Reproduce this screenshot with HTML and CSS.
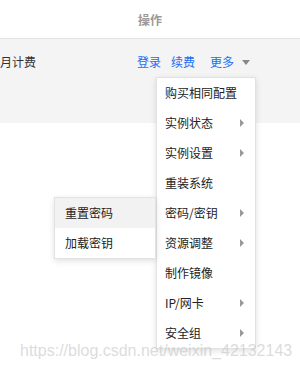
FILE: index.html
```html
<!DOCTYPE html>
<html lang="zh-CN">
<head>
  <meta charset="UTF-8">
  <title>操作</title>
  <link rel="stylesheet" href="styles.css">
</head>
<body>
  <div class="thead">操作</div>

  <div class="row">
    <span class="billing">月计费</span>
    <div class="ops">
      <a class="link">登录</a>
      <a class="link">续费</a>
      <a class="link more">更多 <i class="caret"></i></a>
    </div>
  </div>

  <!-- dropdown for 更多 -->
  <ul class="menu main">
    <li>购买相同配置</li>
    <li class="has-sub">实例状态</li>
    <li class="has-sub">实例设置</li>
    <li>重装系统</li>
    <li class="has-sub">密码/密钥
      <ul class="menu sub">
        <li class="hover">重置密码</li>
        <li>加载密钥</li>
      </ul>
    </li>
    <li class="has-sub">资源调整</li>
    <li>制作镜像</li>
    <li class="has-sub">IP/网卡</li>
    <li class="has-sub">安全组</li>
  </ul>

  <div class="watermark">https://blog.csdn.net/weixin_42132143</div>
</body>
</html>
```

FILE: styles.css
```css
body {
  margin: 0;
  font-family: "Microsoft YaHei", "Noto Sans CJK SC", sans-serif;
  font-size: 12px;
  color: #333;
  background: #fff;
}
.thead {
  height: 38px;
  border-bottom: 1px solid #e3e3e3;
  display: flex;
  align-items: center;
  justify-content: center;
  color: #999;
  font-weight: bold;
}
.row {
  height: 84px;
  background: #f4f4f4;
  display: flex;
  align-items: flex-start;
  padding-top: 15px;
  box-sizing: border-box;
  line-height: 16px;
}
.billing {
  margin-left: 0;
}
.ops {
  margin-left: auto;
  margin-right: 50px;
  display: flex;
  gap: 10px;
}
.link {
  color: #1a6ef5;
  cursor: pointer;
}
.more {
  margin-left: 5px;
  display: flex;
  align-items: center;
  gap: 8px;
}
.caret {
  width: 0;
  height: 0;
  border-left: 4px solid transparent;
  border-right: 4px solid transparent;
  border-top: 5px solid #888;
}
.menu {
  position: absolute;
  width: 100px;
  box-sizing: border-box;
  margin: 0;
  padding: 0;
  list-style: none;
  background: #fff;
  border: 1px solid #e2e2e2;
  box-shadow: 0 2px 6px rgba(0, 0, 0, 0.12);
  color: #222;
  z-index: 1;
}
.menu.main {
  left: 156px;
  top: 77px;
}
.menu li {
  position: relative;
  height: 30px;
  line-height: 30px;
  padding-left: 8px;
  white-space: nowrap;
}
.menu .has-sub::after {
  content: "";
  position: absolute;
  right: 11px;
  top: 11px;
  border-top: 4px solid transparent;
  border-bottom: 4px solid transparent;
  border-left: 4px solid #999;
}
.menu.sub {
  right: calc(100% + 1px);
  top: -1px;
  width: 102px;
}
.menu.sub li {
  padding-left: 10px;
}
.menu.sub .hover {
  background: #f2f2f2;
}
.watermark {
  position: absolute;
  left: 20px;
  top: 342px;
  font-family: "Liberation Sans", Arial, sans-serif;
  font-size: 16px;
  color: rgba(190, 190, 190, 0.55);
  z-index: 2;
}
```
